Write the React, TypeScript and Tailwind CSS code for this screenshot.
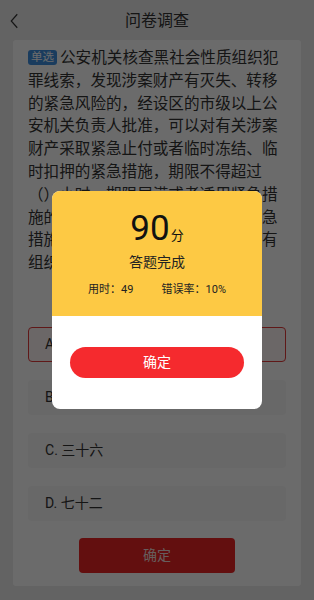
import React from "react";

const OPTIONS = [
  { key: "A", text: "四十八", selected: true },
  { key: "B", text: "二十四", selected: false },
  { key: "C", text: "三十六", selected: false },
  { key: "D", text: "七十二", selected: false },
];

// question text, broken as on the device
const LINES = [
  "公安机关核查黑社会性质组织犯",
  "罪线索，发现涉案财产有灭失、转移",
  "的紧急风险的，经设区的市级以上公",
  "安机关负责人批准，可以对有关涉案",
  "财产采取紧急止付或者临时冻结、临",
  "时扣押的紧急措施，期限不得超过",
  "（）小时。期限届满或者适用紧急措",
  "施的情形消失的，应当立即解除紧急",
  "措施；符合立案条件的，应当按照有",
  "组织犯罪的有关规定处理。",
];

const App = () => {
  return (
    <div
      className="relative h-[600px] w-[314px] overflow-hidden bg-[#ececec] text-[#333]"
      style={{ fontFamily: "Roboto, 'Noto Sans CJK SC', sans-serif" }}
    >
      {/* header */}
      <div className="grid h-10 grid-cols-[40px_1fr_40px] items-center">
        <svg
          viewBox="0 0 24 24"
          className="ml-[6px] mt-[2px] h-[18px] w-[18px]"
          fill="none"
          stroke="#333"
          strokeWidth="1.6"
        >
          <path d="M15 3 L7 12 L15 21" />
        </svg>
        <div className="mt-[2px] text-center text-[16px]">问卷调查</div>
        <div />
      </div>

      {/* question card */}
      <div className="mx-[13px] rounded-[3px] bg-white px-[15px] pt-[7px] pb-[13px]">
        <div className="whitespace-nowrap text-[15.6px] leading-[22.8px] text-[#333]">
          {LINES.map((line, i) => (
            <div key={i}>
              {i === 0 && (
                <span className="mr-[3px] inline-block rounded-[3px] bg-[#3f8fe0] px-[3px] align-[2px] text-[11.5px] leading-[15px] text-white">
                  单选
                </span>
              )}
              {line}
            </div>
          ))}
        </div>

        <div className="mt-[52px] flex flex-col gap-[18px]">
          {OPTIONS.map((o) => (
            <div
              key={o.key}
              className={
                o.selected
                  ? "flex h-[35px] items-center rounded-[4px] border border-[#e33a3a] bg-[#fff6f6] px-[16px] text-[14px]"
                  : "flex h-[35px] items-center rounded-[4px] bg-[#f7f7f7] px-[17px] text-[14px]"
              }
            >
              {o.key}. {o.text}
            </div>
          ))}
        </div>

        <div className="mt-[17px] flex justify-center">
          <button className="h-[35px] w-[156px] rounded-[4px] bg-[#eb2424] text-[14px] text-[#f4dede]">
            确定
          </button>
        </div>
      </div>

      {/* result dialog */}
      <div className="absolute inset-0 flex items-center justify-center bg-black/[0.58]">
        <div className="w-[210px] overflow-hidden rounded-[8px] bg-white">
          <div className="flex h-[125px] flex-col items-center bg-[#fdc944] pt-[19px]">
            <div className="flex items-end text-[#111]">
              <span className="text-[35px] leading-[38px]">90</span>
              <span className="mb-[4px] ml-[1px] text-[13px] leading-[16px]">分</span>
            </div>
            <div className="mt-[4px] text-[14px] leading-[20px] text-[#222]">答题完成</div>
            <div className="mt-[10px] flex w-full justify-between px-[36px] text-[11px] leading-[16px] text-[#222]">
              <span>用时：49</span>
              <span>错误率：10%</span>
            </div>
          </div>
          <div className="px-[18px] pt-[31px] pb-[31px]">
            <button className="h-[31px] w-full rounded-full bg-[#f52a2e] text-[14px] text-white">
              确定
            </button>
          </div>
        </div>
      </div>
    </div>
  );
};

export default App;
